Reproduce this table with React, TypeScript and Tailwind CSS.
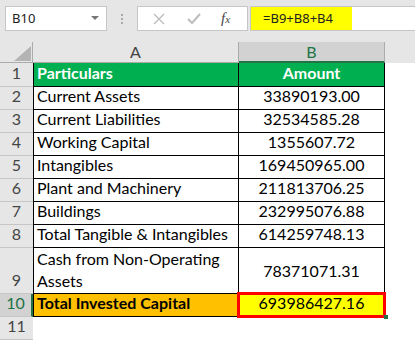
import React from "react";

const rows: { n: string; a: string; b: string }[] = [
  { n: "2", a: "Current Assets", b: "33890193.00" },
  { n: "3", a: "Current Liabilities", b: "32534585.28" },
  { n: "4", a: "Working Capital", b: "1355607.72" },
  { n: "5", a: "Intangibles", b: "169450965.00" },
  { n: "6", a: "Plant and Machinery", b: "211813706.25" },
  { n: "7", a: "Buildings", b: "232995076.88" },
  { n: "8", a: "Total Tangible & Intangibles", b: "614259748.13" },
];

const cellFont = { fontFamily: "Lato, 'Noto Sans', sans-serif" };

export default function App() {
  return (
    <div
      className="w-[415px] h-[341px] bg-[#e6e6e6] overflow-hidden flex flex-col"
      style={{ fontFamily: "'Noto Sans', 'Open Sans', sans-serif" }}
    >
      {/* Formula bar */}
      <div className="h-[42px] flex items-start pt-[6px]">
        <div className="ml-[5px] w-[102px] h-[25px] bg-white border border-[#c6c6c6] flex items-center justify-between pl-[6px] pr-[7px]">
          <span className="text-[13px] text-[#222]">B10</span>
          <svg width="8" height="5" viewBox="0 0 8 5">
            <path d="M0 0 L8 0 L4 4 Z" fill="#777" />
          </svg>
        </div>
        <div className="w-[30px] h-[25px] flex flex-col items-center justify-center gap-[2px]">
          <div className="w-[2px] h-[2px] bg-[#aaa]" />
          <div className="w-[2px] h-[2px] bg-[#aaa]" />
          <div className="w-[2px] h-[2px] bg-[#aaa]" />
        </div>
        <div className="w-[111px] h-[25px] bg-white border border-[#c6c6c6] flex items-center">
          <svg width="12" height="12" viewBox="0 0 12 12" className="ml-[15px]">
            <path d="M1 1 L11 11 M11 1 L1 11" stroke="#bdbdbd" strokeWidth="1.4" />
          </svg>
          <svg width="14" height="12" viewBox="0 0 14 12" className="ml-[22px]">
            <path d="M1 6 L5 10 L13 1" stroke="#bdbdbd" strokeWidth="2" fill="none" />
          </svg>
          <span
            className="ml-[20px] text-[15px] italic text-[#444]"
            style={{ fontFamily: "'Liberation Serif', serif" }}
          >
            f<span className="text-[11px]">x</span>
          </span>
        </div>
        <div className="ml-[2px] flex-1 h-[25px] bg-white border-t border-b border-l border-[#c6c6c6] flex">
          <div className="w-[101px] h-full bg-[#ffff00] flex items-center pl-[12px]">
            <span className="text-[13px] text-[#222]">=B9+B8+B4</span>
          </div>
        </div>
      </div>

      {/* Column headers */}
      <div className="h-[21px] flex" style={cellFont}>
        <div className="w-[33px] h-full border-r border-b border-[#ababab] relative">
          <svg width="17" height="15" viewBox="0 0 17 15" className="absolute left-[14px] top-[4px]">
            <path d="M17 0 L17 15 L0 15 Z" fill="#b4b4b4" />
          </svg>
        </div>
        <div className="w-[206px] h-full border-r border-b border-[#ababab] flex items-center justify-center text-[16px] text-[#444]">
          A
        </div>
        <div className="w-[146px] h-full bg-[#d2d2d2] border-r border-[#ababab] border-b-2 border-b-[#217346] flex items-center justify-center text-[16px] text-[#217346]">
          B
        </div>
        <div className="flex-1" />
      </div>

      {/* Body */}
      <div className="flex-1 bg-white flex flex-col" style={cellFont}>
        {/* Row 1 */}
        <div className="h-[24px] flex">
          <div className="w-[33px] bg-[#e6e6e6] border-b border-[#c6c6c6] flex items-end justify-center pb-[1px] text-[16px] text-[#444]">
            1
          </div>
          <div className="w-[206px] bg-[#00b050] border-l border-r border-b border-black flex items-end pl-[3px] pb-[1px] text-[16px] font-bold text-white">
            Particulars
          </div>
          <div className="w-[146px] bg-[#00b050] border-r border-b border-black flex items-end justify-center pb-[1px] text-[16px] font-bold text-white">
            Amount
          </div>
        </div>

        {rows.map((r) => (
          <div key={r.n} className="h-[23px] flex">
            <div className="w-[33px] bg-[#e6e6e6] border-b border-[#c6c6c6] flex items-end justify-center pb-[1px] text-[16px] text-[#444]">
              {r.n}
            </div>
            <div className="w-[206px] border-l border-r border-b border-black flex items-end pl-[3px] pb-[1px] text-[16px] text-black whitespace-nowrap">
              {r.a}
            </div>
            <div className="w-[146px] border-r border-b border-black flex items-end justify-center pb-[1px] text-[16px] text-black">
              {r.b}
            </div>
          </div>
        ))}

        {/* Row 9 */}
        <div className="h-[46px] flex">
          <div className="w-[33px] bg-[#e6e6e6] border-b border-[#c6c6c6] flex items-end justify-center pb-[1px] text-[16px] text-[#444]">
            9
          </div>
          <div className="w-[206px] border-l border-r border-b border-black flex flex-col justify-end pl-[3px] pb-[1px] text-[16px] leading-[22px] text-black">
            <div>Cash from Non-Operating</div>
            <div>Assets</div>
          </div>
          <div className="w-[146px] border-r border-b border-black flex items-center justify-center text-[16px] text-black">
            78371071.31
          </div>
        </div>

        {/* Row 10 */}
        <div className="h-[23px] flex">
          <div className="w-[33px] bg-[#d2d2d2] border-b border-[#c6c6c6] border-r-2 border-r-[#217346] flex items-end justify-center pb-[1px] text-[16px] text-[#217346]">
            10
          </div>
          <div className="w-[206px] bg-[#ffc000] border-l border-r border-b border-black flex items-end pl-[3px] pb-[1px] text-[16px] font-bold text-black">
            Total Invested Capital
          </div>
          <div className="w-[146px] bg-[#ffff00] border-r border-b border-black flex items-end justify-center pb-[1px] text-[16px] text-black relative">
            693986427.16
            <div className="absolute left-[-2px] right-[-2px] top-[-2px] bottom-[-2px] border-[3px] border-[#ff0000]" />
            <div className="absolute right-[-4px] bottom-[-3px] w-[4px] h-[4px] bg-[#217346]" />
          </div>
        </div>

        {/* Row 11 */}
        <div className="h-[23px] flex">
          <div className="w-[33px] bg-[#e6e6e6] border-b border-[#c6c6c6] flex items-end justify-center pb-[1px] text-[16px] text-[#444]">
            11
          </div>
        </div>
      </div>
    </div>
  );
}
